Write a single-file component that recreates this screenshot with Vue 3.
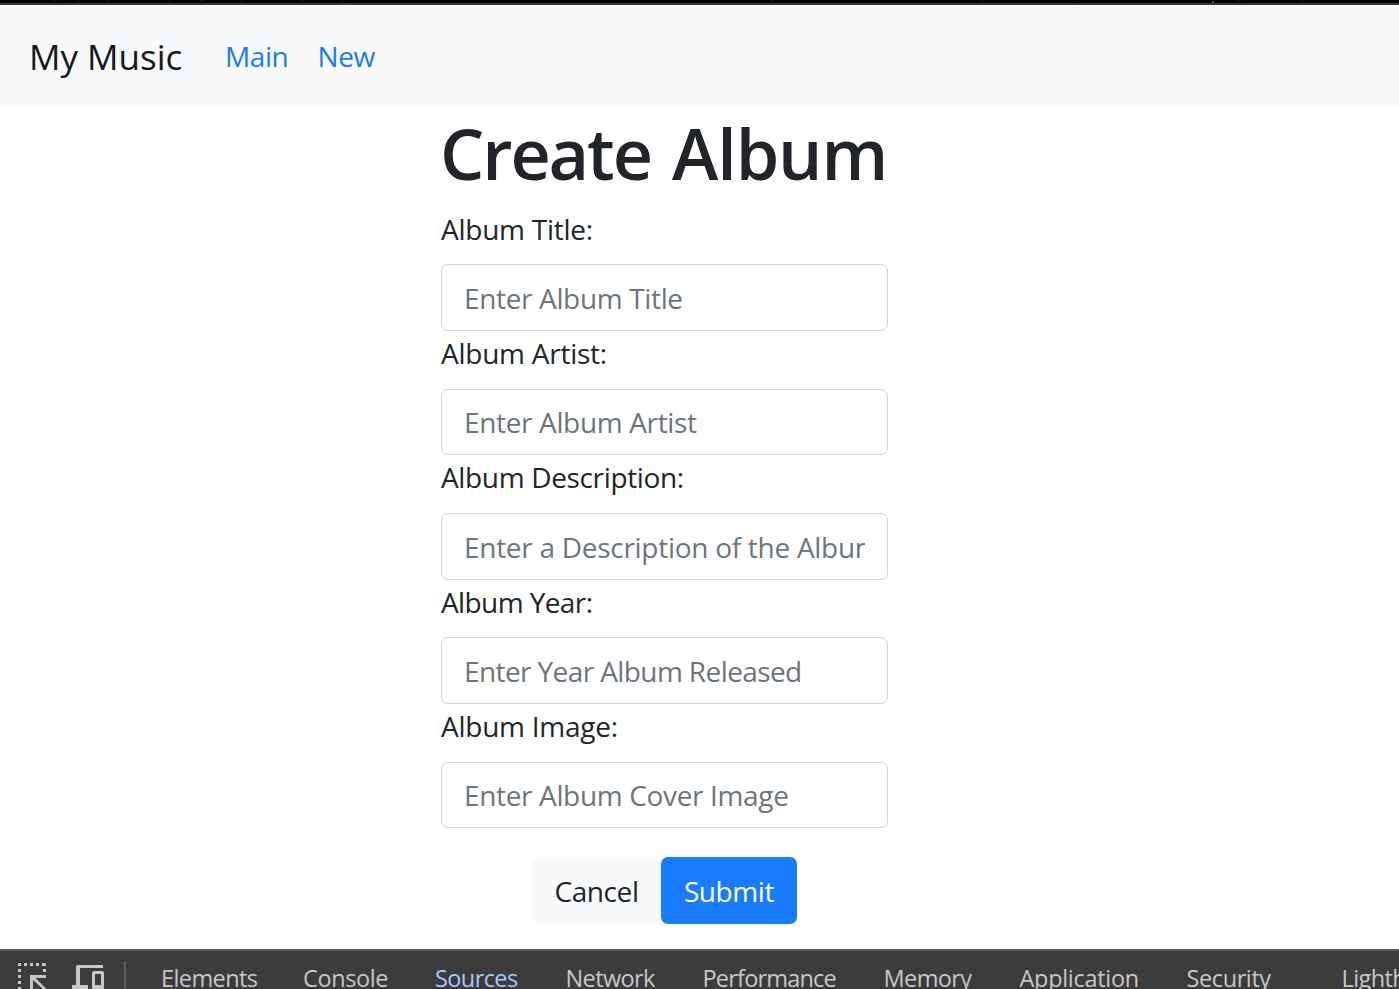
<script setup>
const fields = [
  { id: 'title', label: 'Album Title:', hint: 'Enter Album Title' },
  { id: 'artist', label: 'Album Artist:', hint: 'Enter Album Artist' },
  { id: 'description', label: 'Album Description:', hint: 'Enter a Description of the Album' },
  { id: 'year', label: 'Album Year:', hint: 'Enter Year Album Released' },
  { id: 'image', label: 'Album Image:', hint: 'Enter Album Cover Image' },
]
const tabs = ['Elements', 'Console', 'Sources', 'Network', 'Performance', 'Memory', 'Application', 'Security', 'Lighthouse']
</script>

<template>
  <div class="page">
    <div class="chrome-edge">
      <svg width="1399" height="3" viewBox="0 0 1399 3">
        <path d="M52 1h5M76 2h4M106 1h3M168 2h4M200 1h5M240 2h3M301 1h3M342 2h3M770 1h4M980 1h3M1075 2h4M1236 1h5M1300 1h3" stroke="#191919" />
        <path d="M1213 1v2" stroke="#555" stroke-width="2" />
      </svg>
    </div>
    <nav class="navbar">
      <a class="brand">My Music</a>
      <a class="link main-link">Main</a>
      <a class="link">New</a>
    </nav>
    <main class="content">
      <form class="form" @submit.prevent>
        <h1>Create <span class="noun">Album</span></h1>
        <div v-for="f in fields" :key="f.id" class="field" :class="f.id">
          <label :for="f.id">{{ f.label }}</label>
          <input :id="f.id" type="text" :placeholder="f.hint" />
        </div>
        <div class="actions">
          <button type="button" class="btn cancel">Cancel</button>
          <button type="submit" class="btn submit">Submit</button>
        </div>
      </form>
    </main>
    <footer class="devtools">
      <svg class="icon inspect" width="30" height="28" viewBox="0 0 30 28" fill="#c7c7c7">
        <path d="M1 2l1-1h2v3H1zM7 1h3v3H7zM13 1h3v3h-3zM19 1h3v3h-3zM25 1h2l2 1v2h-4zM26 7h3v3h-3zM1 7h3v3H1zM1 13h3v3H1zM1 19h3v3H1zM1 25h3v3H1z" />
        <path d="M13 13h16v3H18.500L29 26.500V28H27L16 18v10h-3z" />
      </svg>
      <svg class="icon device" width="33" height="26" viewBox="0 0 33 26" fill="#c7c7c7">
        <path d="M6 1h25v3H8v17h8v4H0v-4h4V3q0-2 2-2z" />
        <path fill-rule="evenodd" d="M22 7h8q2 0 2 2v16H20V9q0-2 2-2zm1 3v11h6V10z" />
      </svg>
      <span class="divider"></span>
      <div class="tabs">
        <span v-for="t in tabs" :key="t" class="tab" :class="[t.toLowerCase(), { active: t === 'Sources' }]">{{ t }}</span>
      </div>
    </footer>
  </div>
</template>

<style>
html, body { margin: 0; overflow: hidden; }
</style>

<style scoped>
.page {
  display: flex;
  flex-direction: column;
  width: 1399px;
  height: 989px;
  overflow: hidden;
  background: #fff;
  color: #212529;
  font-family: "Segoe UI", "Open Sans", "Noto Sans", sans-serif;
  font-size: 28px;
  font-weight: 370;
}
.chrome-edge { height: 3px; background: #000; border-bottom: 2px solid #343a40; flex: none; }
.chrome-edge svg { display: block; }
.navbar {
  display: flex;
  align-items: center;
  height: 101px;
  flex: none;
  box-sizing: border-box;
  padding-left: 29px;
  background: #f8f9fb;
  white-space: nowrap;
}
.brand { width: 196px; padding-top: 2px; font-size: 35px; color: #171a1d; letter-spacing: 0; }
.link { color: #197bfd; letter-spacing: -0.4px; }
.main-link { width: 92.5px; }
.content { flex: 1; display: flex; padding-left: 441px; }
.form { width: 447px; }
h1 {
  margin: 0 0 14.8px;
  height: 86px;
  line-height: 94px;
  font-size: 70px;
  font-weight: 600;
  letter-spacing: -2.1px;
  word-spacing: 5px;
  margin-left: -1px;
  white-space: nowrap;
}
.noun { letter-spacing: -1.1px; }
.field { height: 124.4px; letter-spacing: -0.35px; }
.year { letter-spacing: -0.6px; }
label {
  display: block;
  height: 43.2px;
  margin-bottom: 14.2px;
  line-height: 44.4px;
}
.title label, .artist label, .image label { letter-spacing: -0.25px; }
.description label { line-height: 43.6px; }
input {
  display: block;
  box-sizing: border-box;
  width: 447px;
  height: 66.6px;
  padding: 1.4px 22px 0.6px;
  border: 1px solid #ced4da;
  border-radius: 7px;
  background: #fff;
  font: inherit;
  letter-spacing: inherit;
}
.description input { letter-spacing: -0.28px; }
input::placeholder { color: #6c757d; opacity: 1; }
.actions { display: flex; justify-content: center; margin-top: 28px; }
.btn {
  height: 67px;
  padding: 1px 0 0;
  border: 0;
  border-radius: 7px;
  font: inherit;
  letter-spacing: -0.4px;
}
.cancel { width: 129px; background: #f8f9fb; color: #212529; }
.submit { width: 136px; background: #197bfd; color: #fff; }
.devtools {
  display: flex;
  flex: none;
  height: 38px;
  overflow: hidden;
  background: #3c3c3c;
  border-top: 2px solid #5e5e5e;
  color: #c7c7c7;
}
.icon { flex: none; }
.inspect { margin: 11px 0 0 17px; }
.device { margin: 13px 0 0 25px; }
.divider { flex: none; width: 2px; height: 40px; margin: 10px 0 0 19px; background: #5e5e5e; }
.tabs {
  display: grid;
  grid-template-columns: 142px 132px 130.500px 137px 181px 136px 167px 155px 140px;
  margin-left: 35px;
  font-size: 23.5px;
  line-height: 32px;
  letter-spacing: -0.6px;
  padding-top: 11px;
  white-space: nowrap;
}
.performance { letter-spacing: -0.8px; }
.application { letter-spacing: -0.3px; }
.console, .security { letter-spacing: -0.4px; }
.active { color: #a8c7fa; }
</style>
